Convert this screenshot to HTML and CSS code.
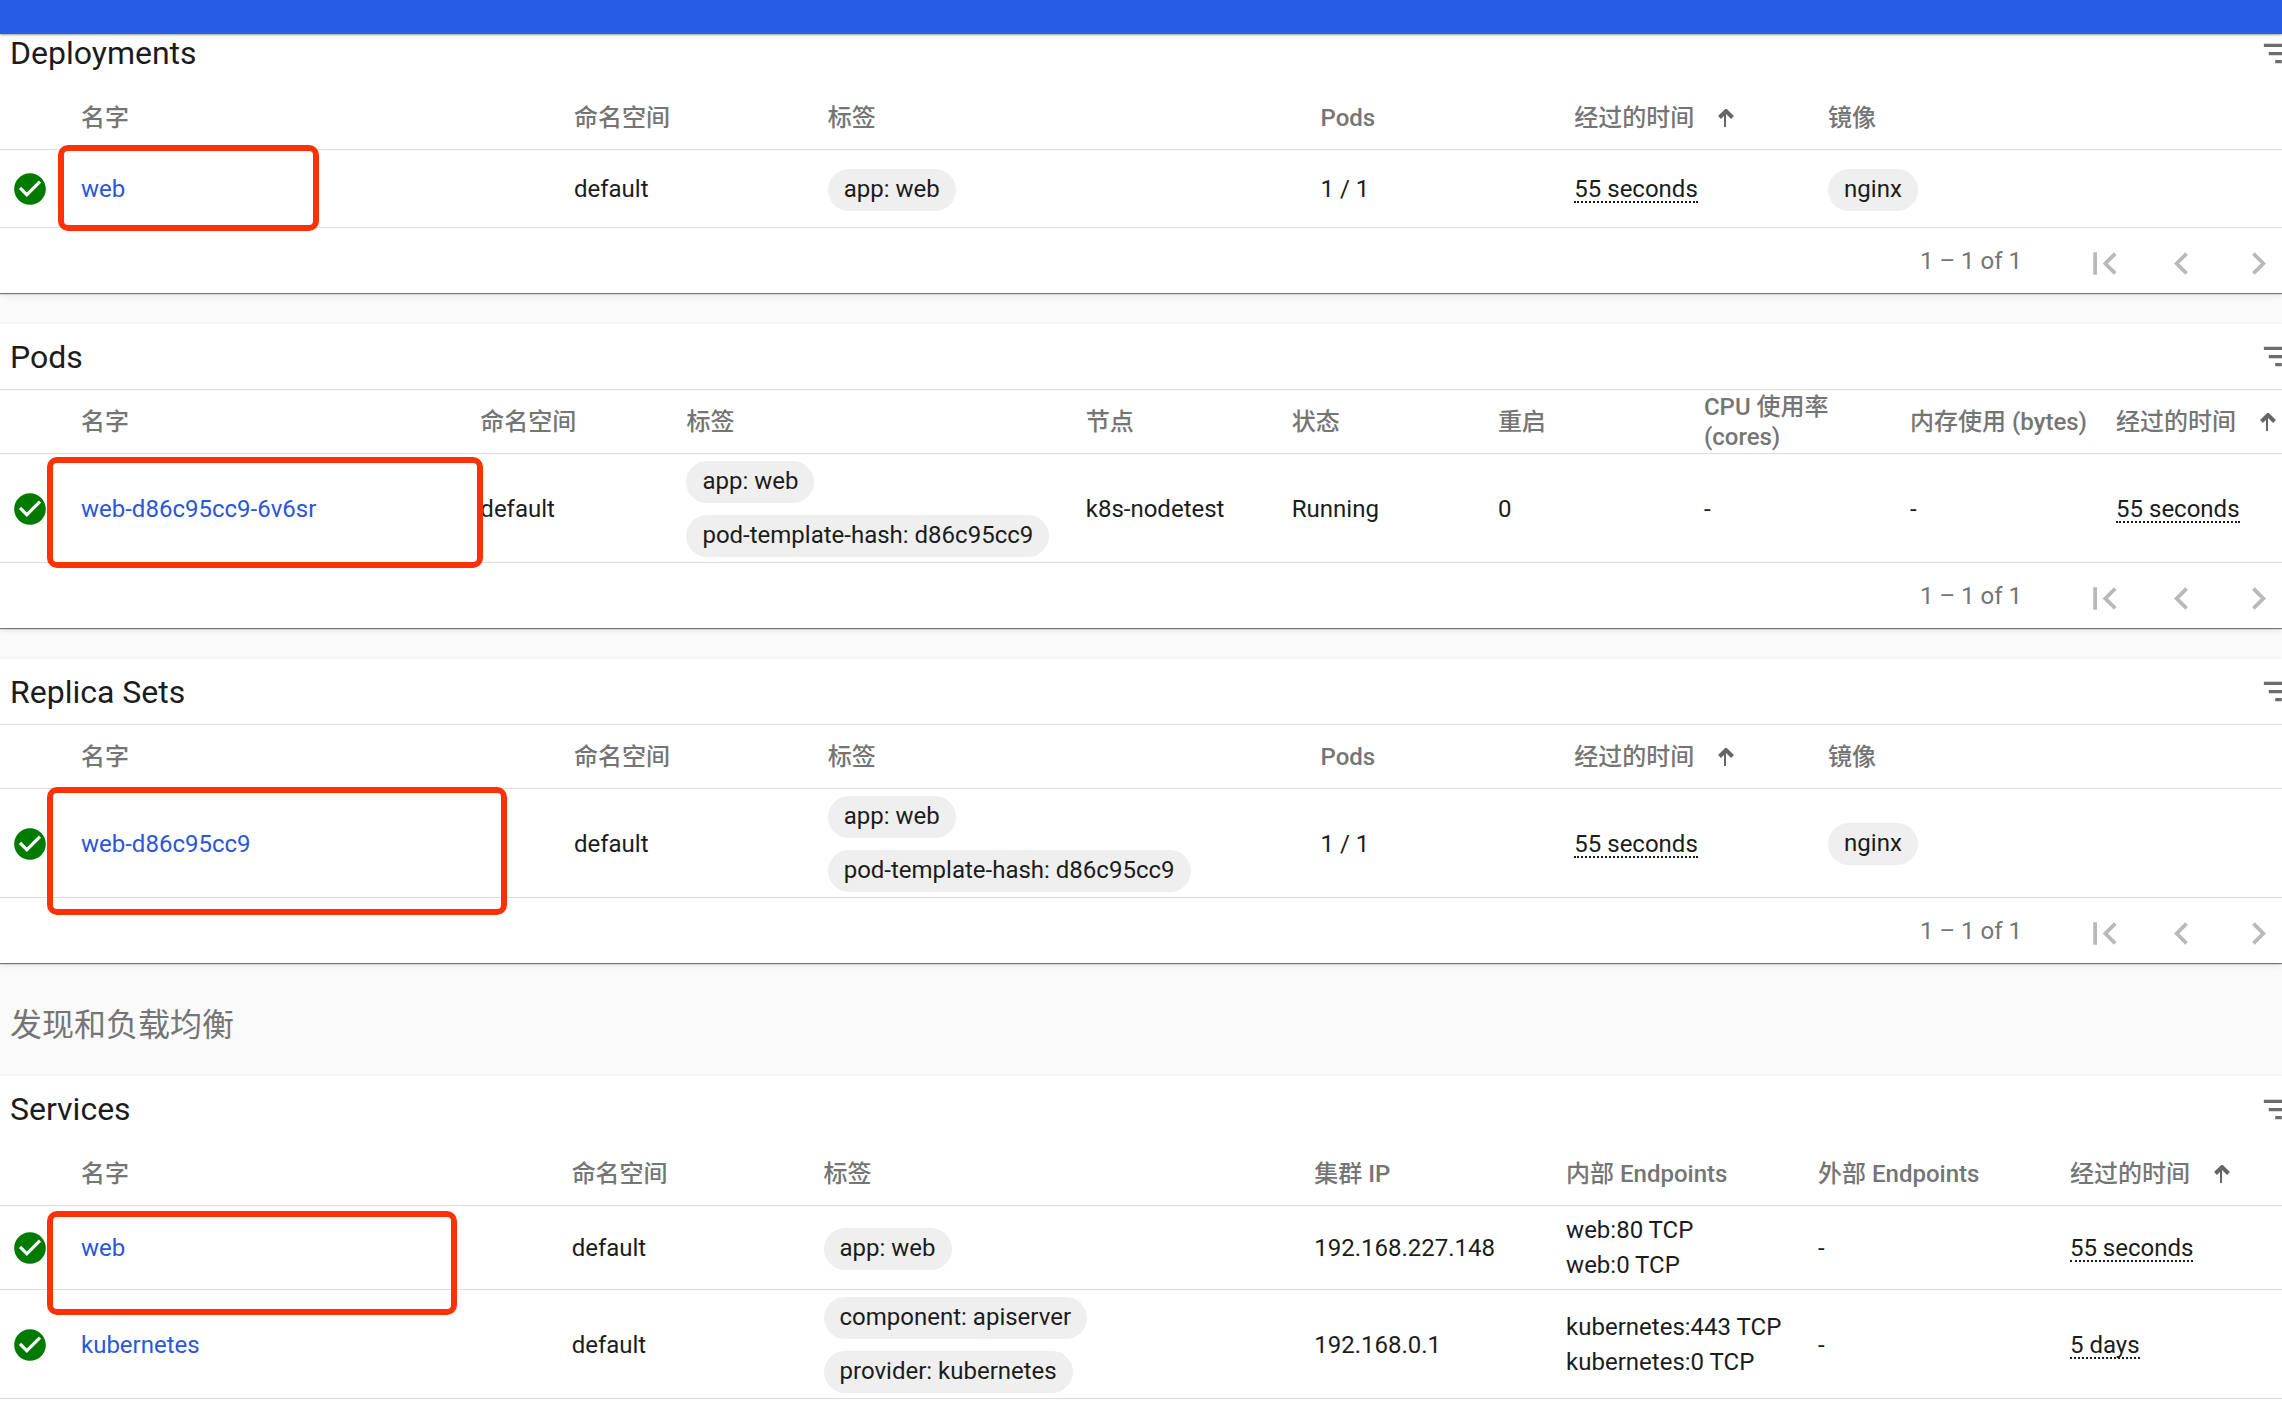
FILE: index.html
```html
<!DOCTYPE html>
<html lang="zh-CN">
<head>
<meta charset="utf-8">
<title>Kubernetes Dashboard</title>
<link rel="stylesheet" href="styles.css">
</head>
<body>
<svg class="sprite" aria-hidden="true">
  <symbol id="check" viewBox="0 0 24 24"><path d="M12 2C6.48 2 2 6.48 2 12s4.48 10 10 10 10-4.48 10-10S17.52 2 12 2zm-2 15l-5-5 1.41-1.41L10 14.17l7.59-7.59L19 8l-9 9z"/></symbol>
  <symbol id="filter" viewBox="0 0 24 24"><path d="M10 18h4v-2h-4v2zM3 6v2h18V6H3zm3 7h12v-2H6v2z"/></symbol>
  <symbol id="first" viewBox="0 0 24 24"><path d="M18.41 16.59L13.82 12l4.59-4.59L17 6l-6 6 6 6zM6 6h2v12H6z"/></symbol>
  <symbol id="prev" viewBox="0 0 24 24"><path d="M15.41 7.41L14 6l-6 6 6 6 1.41-1.41L10.83 12z"/></symbol>
  <symbol id="next" viewBox="0 0 24 24"><path d="M10 6L8.59 7.41 13.17 12l-4.58 4.59L10 18l6-6z"/></symbol>
  <symbol id="sort" viewBox="0 0 16 18"><path d="M6 3h2v15H6z"/><path d="M1.500 8.500L8 2l6.500 6.500" fill="none" stroke="currentColor" stroke-width="4"/></symbol>
</svg>

<header class="topbar"></header>

<main class="content">
  <section class="card">
    <div class="card-title">
      <h2>Deployments</h2>
      <button class="filter" aria-label="Filter"><svg><use href="#filter"/></svg></button>
    </div>
    <table class="wide">
      <colgroup><col class="status"><col class="double"><col class="single"><col class="double"><col class="single"><col class="single"><col></colgroup>
      <thead><tr><th></th><th>名字</th><th>命名空间</th><th>标签</th><th>Pods</th><th><span class="sorted">经过的时间<svg class="sort"><use href="#sort"/></svg></span></th><th>镜像</th></tr></thead>
      <tbody>
        <tr class="plain"><td class="state"><svg><use href="#check"/></svg></td><td><a href="#web">web</a></td><td>default</td><td><div class="chips"><span class="chip">app: web</span></div></td><td>1 / 1</td><td><span class="age">55 seconds</span></td><td><div class="chips"><span class="chip">nginx</span></div></td></tr>
      </tbody>
    </table>
    <div class="pager">
      <span>1 – 1 of 1</span>
      <button disabled aria-label="First page"><svg><use href="#first"/></svg></button>
      <button disabled aria-label="Previous page"><svg><use href="#prev"/></svg></button>
      <button disabled aria-label="Next page"><svg><use href="#next"/></svg></button>
    </div>
    <div class="mark mark-deployment"></div>
  </section>

  <section class="card">
    <div class="card-title ruled">
      <h2>Pods</h2>
      <button class="filter" aria-label="Filter"><svg><use href="#filter"/></svg></button>
    </div>
    <table class="dense">
      <colgroup><col class="status"><col class="double"><col class="single"><col class="double"><col class="single"><col class="single"><col class="single"><col class="single"><col class="single"><col></colgroup>
      <thead><tr><th></th><th>名字</th><th>命名空间</th><th>标签</th><th>节点</th><th>状态</th><th>重启</th><th>CPU 使用率 (cores)</th><th>内存使用 (bytes)</th><th><span class="sorted">经过的时间<svg class="sort"><use href="#sort"/></svg></span></th></tr></thead>
      <tbody>
        <tr><td class="state"><svg><use href="#check"/></svg></td><td><a href="#pod">web-d86c95cc9-6v6sr</a></td><td>default</td><td><div class="chips"><span class="chip">app: web</span><span class="chip">pod-template-hash: d86c95cc9</span></div></td><td>k8s-nodetest</td><td>Running</td><td>0</td><td>-</td><td>-</td><td><span class="age">55 seconds</span></td></tr>
      </tbody>
    </table>
    <div class="pager">
      <span>1 – 1 of 1</span>
      <button disabled aria-label="First page"><svg><use href="#first"/></svg></button>
      <button disabled aria-label="Previous page"><svg><use href="#prev"/></svg></button>
      <button disabled aria-label="Next page"><svg><use href="#next"/></svg></button>
    </div>
    <div class="mark mark-pod"></div>
  </section>

  <section class="card">
    <div class="card-title ruled">
      <h2>Replica Sets</h2>
      <button class="filter" aria-label="Filter"><svg><use href="#filter"/></svg></button>
    </div>
    <table class="wide">
      <colgroup><col class="status"><col class="double"><col class="single"><col class="double"><col class="single"><col class="single"><col></colgroup>
      <thead><tr><th></th><th>名字</th><th>命名空间</th><th>标签</th><th>Pods</th><th><span class="sorted">经过的时间<svg class="sort"><use href="#sort"/></svg></span></th><th>镜像</th></tr></thead>
      <tbody>
        <tr><td class="state"><svg><use href="#check"/></svg></td><td><a href="#rs">web-d86c95cc9</a></td><td>default</td><td><div class="chips"><span class="chip">app: web</span><span class="chip">pod-template-hash: d86c95cc9</span></div></td><td>1 / 1</td><td><span class="age">55 seconds</span></td><td><div class="chips"><span class="chip">nginx</span></div></td></tr>
      </tbody>
    </table>
    <div class="pager">
      <span>1 – 1 of 1</span>
      <button disabled aria-label="First page"><svg><use href="#first"/></svg></button>
      <button disabled aria-label="Previous page"><svg><use href="#prev"/></svg></button>
      <button disabled aria-label="Next page"><svg><use href="#next"/></svg></button>
    </div>
    <div class="mark mark-replica"></div>
  </section>

  <h1 class="group">发现和负载均衡</h1>

  <section class="card">
    <div class="card-title">
      <h2>Services</h2>
      <button class="filter" aria-label="Filter"><svg><use href="#filter"/></svg></button>
    </div>
    <table class="services">
      <colgroup><col class="status"><col class="double"><col class="single"><col class="double"><col class="single"><col class="single"><col class="single"><col></colgroup>
      <thead><tr><th></th><th>名字</th><th>命名空间</th><th>标签</th><th>集群 IP</th><th>内部 Endpoints</th><th>外部 Endpoints</th><th><span class="sorted">经过的时间<svg class="sort"><use href="#sort"/></svg></span></th></tr></thead>
      <tbody>
        <tr><td class="state"><svg><use href="#check"/></svg></td><td><a href="#svc-web">web</a></td><td>default</td><td><div class="chips"><span class="chip">app: web</span></div></td><td>192.168.227.148</td><td class="endpoints">web:80 TCP<br>web:0 TCP</td><td>-</td><td><span class="age">55 seconds</span></td></tr>
        <tr><td class="state"><svg><use href="#check"/></svg></td><td><a href="#svc-kubernetes">kubernetes</a></td><td>default</td><td><div class="chips"><span class="chip">component: apiserver</span><span class="chip">provider: kubernetes</span></div></td><td>192.168.0.1</td><td class="endpoints">kubernetes:443 TCP<br>kubernetes:0 TCP</td><td>-</td><td><span class="age">5 days</span></td></tr>
      </tbody>
    </table>
    <div class="pager">
      <span>1 – 2 of 2</span>
      <button disabled aria-label="First page"><svg><use href="#first"/></svg></button>
      <button disabled aria-label="Previous page"><svg><use href="#prev"/></svg></button>
      <button disabled aria-label="Next page"><svg><use href="#next"/></svg></button>
    </div>
    <div class="mark mark-service"></div>
  </section>
</main>
</body>
</html>
```
FILE: styles.css
```css
* { box-sizing: border-box; }

body {
  margin: 0;
  height: 100vh;
  overflow: hidden;
  background: #fafafa;
  color: #1c1c1c;
  font: 24px/30px Roboto, "Noto Sans CJK SC", sans-serif;
}

.sprite { display: none; }
svg { display: block; fill: currentColor; }
button { padding: 0; border: 0; background: none; color: inherit; flex: none; }
h1, h2 { margin: 0; font-size: 32px; line-height: 40px; font-weight: 400; }
a { color: #2a56d8; text-decoration: none; }

.topbar {
  position: relative;
  z-index: 2;
  height: 34px;
  margin-bottom: -14px;
  background: #255de4;
  box-shadow: 0 1px 2px rgba(0, 0, 0, .4);
}

.card {
  position: relative;
  margin-bottom: 31px;
  background: #fff;
  box-shadow: 0 1px 1px rgba(0, 0, 0, .5), 0 2px 6px rgba(0, 0, 0, .1);
}

.card-title {
  display: flex;
  align-items: center;
  justify-content: space-between;
  height: 66px;
  padding-left: 10px;
  overflow: hidden;
}
.ruled { border-bottom: 1px solid #dcdcdc; }
.filter { margin-right: -16px; color: #6c6c6c; }
.filter svg { width: 39px; height: 39px; }

table { width: 100%; table-layout: fixed; border-collapse: separate; border-spacing: 0; }
.status { width: 81px; }
.wide .double { width: 21.6%; }
.wide .single { width: 11.12%; }
.dense .double { width: 17.5%; }
.dense .single { width: 9.03%; }
.services .double { width: 21.5%; }
.services .single { width: 11.04%; }

th, td {
  padding: 0;
  border-bottom: 1px solid #dcdcdc;
  text-align: left;
  vertical-align: middle;
  white-space: nowrap;
}
th { height: 64px; padding-right: 10px; color: #757575; font-weight: 500; white-space: normal; }
td { height: 84px; padding-top: 1px; }
.plain td { height: 78px; }

.sorted { display: flex; align-items: center; gap: 24px; white-space: nowrap; }
.sort { width: 16px; height: 18px; flex: none; color: #666; }

.state svg { width: 38px; height: 38px; margin-left: 11px; color: #007a00; }

.chips { display: flex; flex-direction: column; align-items: flex-start; gap: 12px; padding: 6px 0 5px; }
.chip { height: 42px; padding: 0 16px; border-radius: 21px; background: #efefef; line-height: 40px; }
.age { display: inline-block; border-bottom: 2px dotted #1c1c1c; line-height: 24px; }
.endpoints { line-height: 35px; }

.pager {
  display: flex;
  align-items: center;
  justify-content: flex-end;
  gap: 32px;
  height: 65px;
  padding-right: 1px;
  color: #757575;
}
.pager span { margin-right: 28px; }
.pager button { padding-top: 6px; color: #b9b9b9; }
.pager svg { width: 45px; height: 45px; }

.group { padding: 42px 10px 31px; margin-top: -31px; color: #757575; }

/* Red highlight frames drawn over the table rows. */
.mark { position: absolute; border: 6px solid #fb3207; border-radius: 10px; pointer-events: none; }
.mark-deployment { left: 58px; top: 125px; width: 261px; height: 86px; }
.mark-pod { left: 47px; top: 133px; width: 436px; height: 111px; }
.mark-replica { left: 47px; top: 128px; width: 460px; height: 128px; }
.mark-service { left: 47px; top: 135px; width: 410px; height: 104px; }
```
